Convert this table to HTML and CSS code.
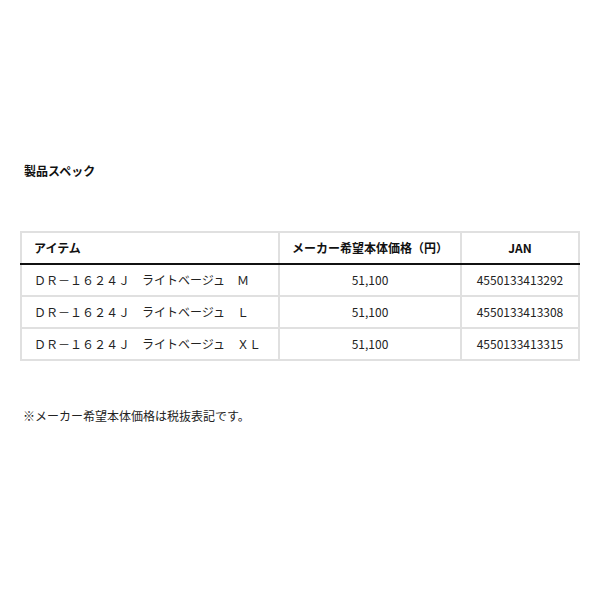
FILE: index.html
```html
<!DOCTYPE html>
<html lang="ja">
<head>
<meta charset="utf-8">
<link rel="stylesheet" href="styles.css">
</head>
<body>
<div class="page">
  <h2 class="title">製品スペック</h2>
  <table class="spec">
    <thead>
      <tr>
        <th class="c-item">アイテム</th>
        <th class="c-price">メーカー希望本体価格（円）</th>
        <th class="c-jan">JAN</th>
      </tr>
    </thead>
    <tbody>
      <tr>
        <td class="c-item">ＤＲ－１６２４Ｊ　ライトベージュ　Ｍ</td>
        <td class="c-price">51,100</td>
        <td class="c-jan">4550133413292</td>
      </tr>
      <tr>
        <td class="c-item">ＤＲ－１６２４Ｊ　ライトベージュ　Ｌ</td>
        <td class="c-price">51,100</td>
        <td class="c-jan">4550133413308</td>
      </tr>
      <tr>
        <td class="c-item">ＤＲ－１６２４Ｊ　ライトベージュ　ＸＬ</td>
        <td class="c-price">51,100</td>
        <td class="c-jan">4550133413315</td>
      </tr>
    </tbody>
  </table>
  <p class="note">※メーカー希望本体価格は税抜表記です。</p>
</div>
</body>
</html>
```
FILE: styles.css
```css
html, body {
  margin: 0;
  padding: 0;
  background: #fff;
}
body {
  font-family: "Noto Sans CJK JP", "Noto Sans", sans-serif;
  color: #222;
  font-size: 12px;
}
.page {
  padding: 162px 20px 0 20px;
}
.title {
  margin: 0 0 0 4px;
  font-size: 12px;
  font-weight: bold;
  line-height: 18px;
  color: #111;
}
.spec {
  margin-top: 51px;
  width: 560px;
  border-collapse: collapse;
  table-layout: fixed;
}
.spec th, .spec td {
  border: 2px solid #e0e0e0;
  height: 28px;
  padding: 1px 12px;
  font-size: 12px;
  line-height: 16px;
}
.spec th {
  font-weight: bold;
  border-bottom: 2px solid #111;
  color: #111;
}
.spec .c-item { width: 232px; text-align: left; }
.spec .c-price { width: 156px; text-align: center; }
.spec .c-jan { text-align: center; }
.note {
  margin: 46px 0 0 3px;
  font-size: 12px;
  line-height: 18px;
  color: #222;
}
```
